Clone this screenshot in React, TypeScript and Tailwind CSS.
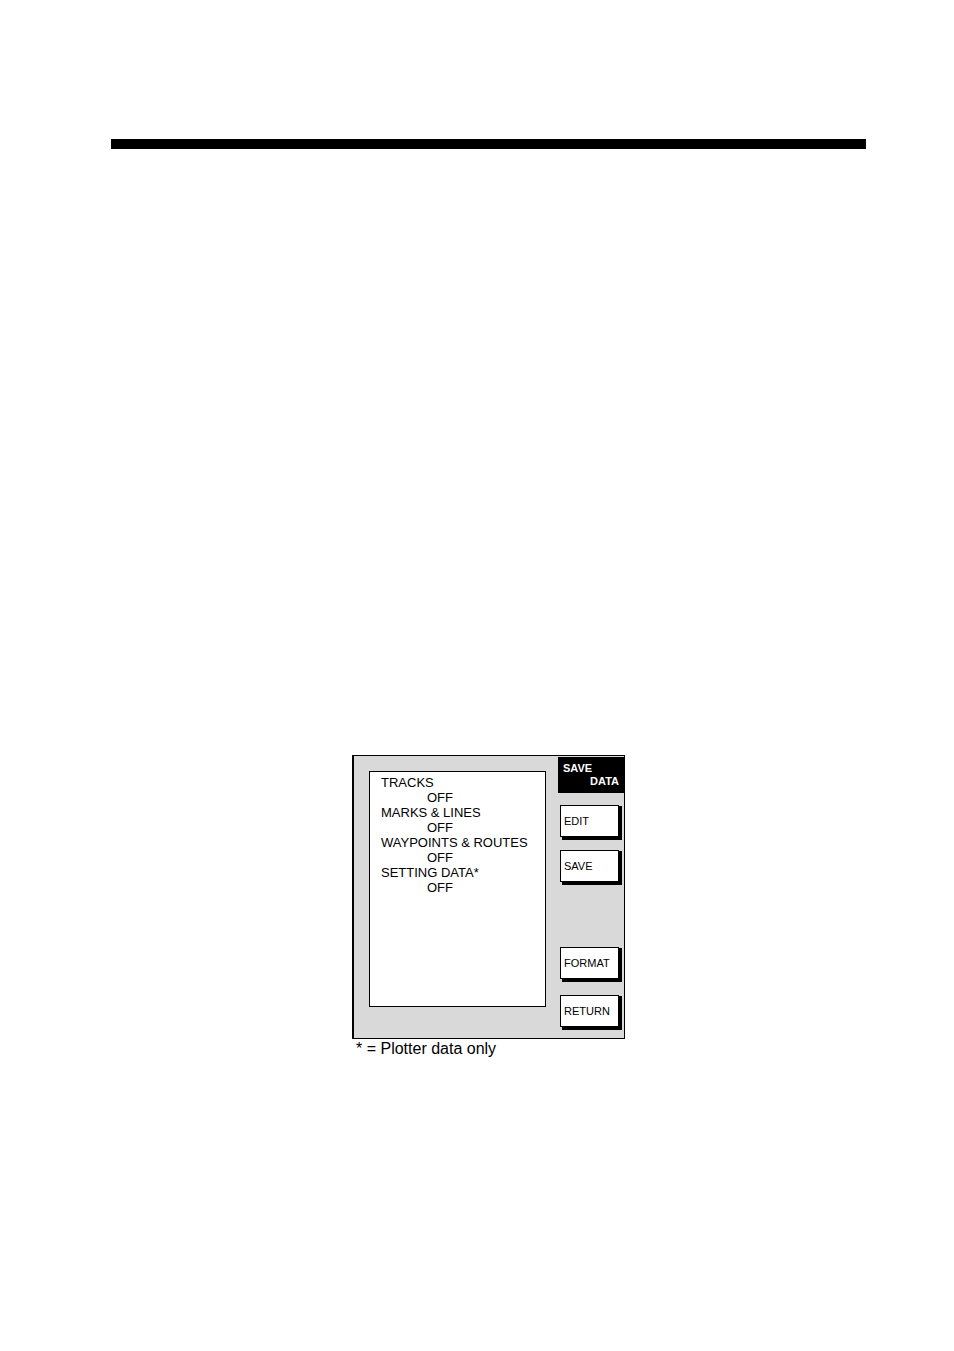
import React from "react";

const items = [
  { name: "TRACKS", value: "OFF" },
  { name: "MARKS & LINES", value: "OFF" },
  { name: "WAYPOINTS & ROUTES", value: "OFF" },
  { name: "SETTING DATA*", value: "OFF" },
];

function SoftKey({ label }: { label: string }) {
  return (
    <button
      type="button"
      className="h-8 w-[59px] border border-black bg-white pl-[3px] text-left text-[11px] leading-4 whitespace-nowrap shadow-[3px_1px_0_#000,2px_3px_0_#000,3px_3px_0_#000]"
    >
      {label}
    </button>
  );
}

export default function App() {
  return (
    <main className="min-h-screen bg-white pt-[139px] pr-[88px] pb-16 pl-[111px] font-['Liberation_Sans',Arial,sans-serif] text-black">
      <hr className="h-[10px] border-0 bg-black" />

      <figure className="mx-auto mt-[606px] w-[273px]">
        <div className="flex gap-3 border border-l-2 border-black bg-[#d9d9d9] pl-[15px]">
          <dl className="mt-[15px] mb-[31px] h-[236px] flex-1 border border-black bg-white pt-[3px] pl-[11px] text-[13px] leading-[15px] whitespace-nowrap">
            {items.map((item) => (
              <div key={item.name}>
                <dt>{item.name}</dt>
                <dd className="pl-[46px]">{item.value}</dd>
              </div>
            ))}
          </dl>

          <div className="flex w-[66px] flex-col pt-px">
            <h1 className="h-9 bg-black px-[5px] pt-[5px] text-[11px] leading-[13px] font-bold text-white">
              <span className="block">SAVE</span>
              <span className="block text-right">DATA</span>
            </h1>
            <div className="mt-3 flex flex-col gap-[13px] pl-[2px]">
              <SoftKey label="EDIT" />
              <SoftKey label="SAVE" />
            </div>
            <div className="mt-auto mb-[11px] flex flex-col gap-4 pl-[2px]">
              <SoftKey label="FORMAT" />
              <SoftKey label="RETURN" />
            </div>
          </div>
        </div>
        <figcaption className="pl-1 text-base leading-5 whitespace-nowrap">
          * = Plotter data only
        </figcaption>
      </figure>
    </main>
  );
}
